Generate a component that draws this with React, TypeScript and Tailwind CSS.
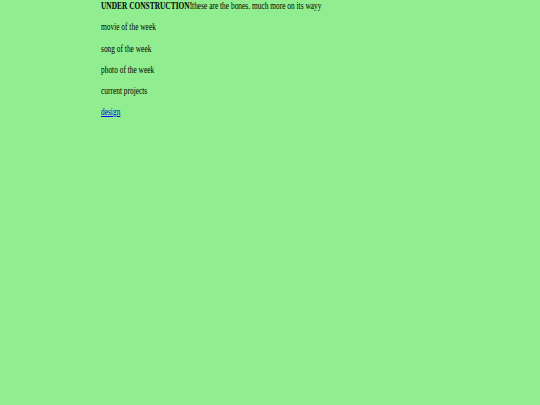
export default function App() {
  const items = ["movie of the week", "song of the week", "photo of the week", "current projects"];

  return (
    <div className="min-h-[405px] w-full bg-[#90ee90] text-black" style={{ fontFamily: '"Liberation Serif", "Times New Roman", serif' }}>
      <div className="pl-[101px] flex flex-col gap-[10.25px] text-[10.5px] leading-[11px]">
        <p className="origin-left scale-x-[0.705] whitespace-nowrap">
          <b>UNDER CONSTRUCTION!</b>these are the bones. much more on its wayy
        </p>
        {items.map((item) => (
          <p key={item} className="origin-left scale-x-[0.705] whitespace-nowrap">
            {item}
          </p>
        ))}
        <p className="origin-left scale-x-[0.705] whitespace-nowrap">
          <a href="#" className="text-[#0000ee] underline">
            design
          </a>
        </p>
      </div>
    </div>
  );
}
